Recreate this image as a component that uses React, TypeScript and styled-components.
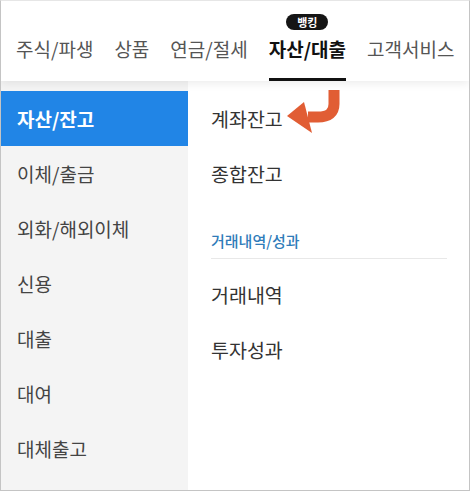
import React from "react";
import styled, { createGlobalStyle } from "styled-components";

const Global = createGlobalStyle`
  html, body { margin: 0; padding: 0; background: #fff; }
  * { box-sizing: border-box; }
  body { font-family: "Noto Sans CJK KR", "Noto Sans", sans-serif; }
`;

const Frame = styled.div`
  width: 470px;
  height: 491px;
  border: 1px solid #c4c4c4;
  border-top-color: #e6e6e6;
  display: flex;
  flex-direction: column;
  overflow: hidden;
  background: #fff;
`;

const Header = styled.nav`
  height: 80px;
  display: flex;
  gap: 21px;
  padding-left: 15px;
  position: relative;
  z-index: 1;
  background: #fff;
  box-shadow: 0 3px 8px rgba(0, 0, 0, 0.07);
  flex-shrink: 0;
`;

const Tab = styled.div<{ $active?: boolean }>`
  position: relative;
  display: flex;
  align-items: flex-end;
  padding-bottom: 17px;
  border-bottom: 3px solid ${(p) => (p.$active ? "#111" : "transparent")};
  font-size: 19px;
  line-height: 24px;
  font-weight: ${(p) => (p.$active ? 700 : 400)};
  color: ${(p) => (p.$active ? "#111" : "#555")};
  white-space: nowrap;
`;

const Badge = styled.span`
  position: absolute;
  top: 13px;
  left: 50%;
  transform: translateX(-50%);
  height: 16px;
  width: 42px;
  border-radius: 8px;
  background: #151515;
  color: #fff;
  font-size: 11px;
  font-weight: 700;
  line-height: 16px;
  text-align: center;
`;

const Body = styled.div`
  flex: 1;
  display: flex;
  min-height: 0;
`;

const Sidebar = styled.ul`
  list-style: none;
  margin: 0;
  padding: 10px 0 0;
  width: 187px;
  background: #f4f4f4;
  flex-shrink: 0;
`;

const SideItem = styled.li<{ $active?: boolean }>`
  height: 55px;
  display: flex;
  align-items: center;
  padding-left: 16px;
  font-size: 19px;
  font-weight: ${(p) => (p.$active ? 700 : 400)};
  color: ${(p) => (p.$active ? "#fff" : "#444")};
  background: ${(p) => (p.$active ? "#2185e6" : "transparent")};
`;

const Panel = styled.div`
  flex: 1;
  padding: 10px 22px 0 23px;
  display: flex;
  flex-direction: column;
`;

const PanelItem = styled.div`
  height: 55px;
  display: flex;
  align-items: center;
  gap: 3px;
  font-size: 19.5px;
  color: #333;
`;

const SectionTitle = styled.div`
  padding-top: 30px;
  padding-bottom: 7px;
  line-height: 20px;
  font-size: 15px;
  font-weight: 500;
  color: #2f7cb9;
  border-bottom: 1px solid #e8e8e8;
  margin-bottom: 8px;
`;

const Arrow = () => (
  <svg width="56" height="48" viewBox="0 0 56 48" style={{ marginTop: -13 }}>
    <path d="M48 2 V16 Q48 29 32 29 H22" fill="none" stroke="#e15d34" strokeWidth="11" />
    <polygon points="1,28 18,14 26,45" fill="#e15d34" />
  </svg>
);

const tabs = ["주식/파생", "상품", "연금/절세", "자산/대출", "고객서비스"];
const side = ["자산/잔고", "이체/출금", "외화/해외이체", "신용", "대출", "대여", "대체출고"];

export default function App() {
  return (
    <>
      <Global />
      <Frame>
        <Header>
          {tabs.map((t) => (
            <Tab key={t} $active={t === "자산/대출"}>
              {t === "자산/대출" && <Badge>뱅킹</Badge>}
              {t}
            </Tab>
          ))}
        </Header>
        <Body>
          <Sidebar>
            {side.map((s, i) => (
              <SideItem key={s} $active={i === 0}>
                {s}
              </SideItem>
            ))}
          </Sidebar>
          <Panel>
            <PanelItem>
              계좌잔고
              <Arrow />
            </PanelItem>
            <PanelItem>종합잔고</PanelItem>
            <SectionTitle>거래내역/성과</SectionTitle>
            <PanelItem>거래내역</PanelItem>
            <PanelItem>투자성과</PanelItem>
          </Panel>
        </Body>
      </Frame>
    </>
  );
}
